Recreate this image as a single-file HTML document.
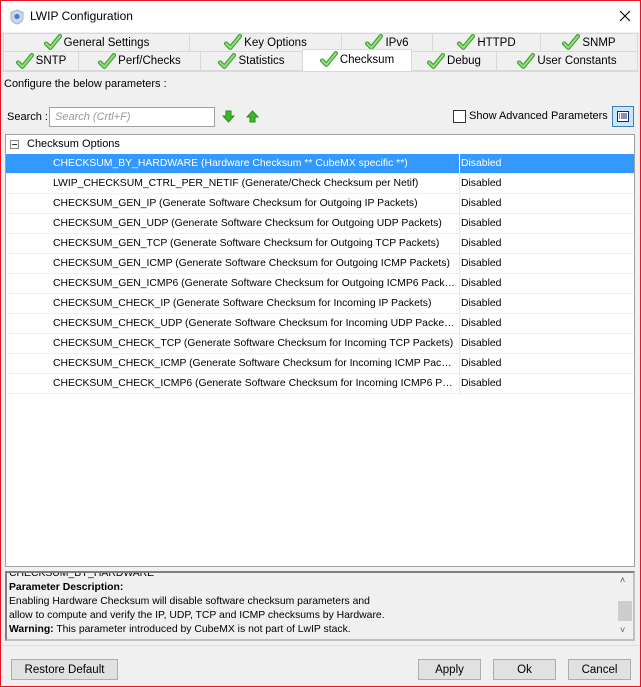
<!DOCTYPE html>
<html><head><style>
*{margin:0;padding:0;box-sizing:border-box}
body{width:641px;height:687px;background:#f0f0f0;font-family:"Liberation Sans",sans-serif;font-size:11px;color:#000;position:relative;overflow:hidden}
.win{position:absolute;left:0;top:0;width:641px;height:687px;border:1px solid #e81123}
.title{position:absolute;left:1px;top:1px;width:639px;height:31px;background:#fff}
.abs{position:absolute}
.tab{position:absolute;height:19px;background:#f0f0f0;border:1px solid #d9d9d9;font-size:11.5px;display:flex;align-items:center;justify-content:center;gap:2px}
.tab svg{width:18px;height:17px}
.sel{background:#fff;border-bottom:none}
.table{position:absolute;left:5px;top:134px;width:630px;height:433px;background:#fff;border:1px solid #a0a0a0;font-size:10.4px}
.row{position:absolute;left:0;width:628px;height:20px;border-bottom:1px solid #f0f0f0;line-height:19px}
.row .n{position:absolute;left:47px;white-space:nowrap;width:402px;overflow:hidden;text-overflow:ellipsis}
.row .v{position:absolute;left:455px;padding-left:0}
.row .d{position:absolute;left:453px;top:0;width:1px;height:20px;background:#e8e8e8}
.hl{background:#3399ff;color:#fff}
.hl .d{background:#fff}
.btn{position:absolute;top:659px;height:21px;background:#e1e1e1;border:1px solid #adadad;font-size:11.5px;display:flex;align-items:center;justify-content:center}
</style></head><body>
<div class="win"></div>
<div class="title">
<svg class="abs" style="left:9px;top:8px" width="14" height="16" viewBox="0 0 14 16"><path d="M7 1 L13 3.5 V9 C13 12 10 14 7 15 C4 14 1 12 1 9 V3.5Z" fill="#cfd8e6" stroke="#9fb1c9"/><path d="M4.5 6 L7 4.8 L9.5 6 V9 L7 10.3 L4.5 9Z" fill="#3b7fd6"/></svg>
<div class="abs" style="left:29px;top:8px;font-size:12px">LWIP Configuration</div>
<svg class="abs" style="left:618px;top:9px" width="12" height="12" viewBox="0 0 12 12"><path d="M1 1L11 11M11 1L1 11" stroke="#000" stroke-width="1.1"/></svg>
</div>
<svg width="0" height="0" style="position:absolute"><defs><symbol id="ck" viewBox="0 0 17 16"><path d="M2 9 L6 13 L15 2" fill="none" stroke="#3a9a2e" stroke-width="4" stroke-linecap="round" stroke-linejoin="round"/><path d="M2 9 L6 13 L15 2" fill="none" stroke="#8fe07a" stroke-width="2" stroke-linecap="round" stroke-linejoin="round"/></symbol></defs></svg>
<div class="tab" style="left:3px;top:33px;width:187px"><svg><use href="#ck"/></svg>General Settings</div>
<div class="tab" style="left:189px;top:33px;width:153px"><svg><use href="#ck"/></svg>Key Options</div>
<div class="tab" style="left:341px;top:33px;width:92px"><svg><use href="#ck"/></svg>IPv6</div>
<div class="tab" style="left:432px;top:33px;width:109px"><svg><use href="#ck"/></svg>HTTPD</div>
<div class="tab" style="left:540px;top:33px;width:98px"><svg><use href="#ck"/></svg>SNMP</div>
<div class="tab" style="left:3px;top:51px;width:76px;height:20px"><svg><use href="#ck"/></svg>SNTP</div>
<div class="tab" style="left:78px;top:51px;width:123px;height:20px"><svg><use href="#ck"/></svg>Perf/Checks</div>
<div class="tab" style="left:200px;top:51px;width:103px;height:20px"><svg><use href="#ck"/></svg>Statistics</div>
<div class="tab sel" style="left:302px;top:49px;width:110px;height:23px;padding-bottom:3px"><svg><use href="#ck"/></svg>Checksum</div>
<div class="tab" style="left:411px;top:51px;width:86px;height:20px"><svg><use href="#ck"/></svg>Debug</div>
<div class="tab" style="left:496px;top:51px;width:142px;height:20px"><svg><use href="#ck"/></svg>User Constants</div>
<div class="abs" style="left:2px;top:71px;width:637px;height:1px;background:#d9d9d9"></div>
<div class="abs" style="left:4px;top:78px">Configure the below parameters :</div>
<div class="abs" style="left:7px;top:111px">Search :</div>
<div class="abs" style="left:49px;top:107px;width:166px;height:20px;background:#fff;border:1px solid #a0a0a0;color:#999;font-style:italic;padding:3px 5px">Search (Crtl+F)</div>
<svg class="abs" style="left:222px;top:110px" width="13" height="13" viewBox="0 0 13 13"><path d="M4 1H9V6H12L6.5 12L1 6H4Z" fill="#3cb82c" stroke="#2a8a1e"/></svg>
<svg class="abs" style="left:246px;top:110px" width="13" height="13" viewBox="0 0 13 13"><path d="M4 12H9V7H12L6.5 1L1 7H4Z" fill="#3cb82c" stroke="#2a8a1e"/></svg>
<div class="abs" style="left:453px;top:110px;width:13px;height:13px;background:#fff;border:1px solid #333"></div>
<div class="abs" style="left:469px;top:110px">Show Advanced Parameters</div>
<div class="abs" style="left:612px;top:106px;width:22px;height:21px;background:#cce4f7;border:1px solid #3c7fb1"></div>
<svg class="abs" style="left:617px;top:111px" width="12" height="11" viewBox="0 0 12 11"><rect x="0.5" y="0.5" width="11" height="10" fill="#fff" stroke="#0a2a6a"/><path d="M2 3H3M4 3H10M2 5H3M4 5H10M2 7H3M4 7H10" stroke="#0a2a6a"/></svg>
<div class="table">
<div class="row" style="top:0;border-bottom:none"><div class="abs" style="left:4px;top:5px;width:9px;height:9px;border:1px solid #888;background:#fff"></div><div class="abs" style="left:6px;top:9px;width:5px;height:1px;background:#333"></div><span class="abs" style="left:21px;font-size:11px">Checksum Options</span></div>
<div class="row hl" style="top:19px"><span class="n">CHECKSUM_BY_HARDWARE (Hardware Checksum ** CubeMX specific **)</span><i class="d"></i><span class="v">Disabled</span></div>
<div class="row" style="top:39px"><span class="n">LWIP_CHECKSUM_CTRL_PER_NETIF (Generate/Check Checksum per Netif)</span><i class="d"></i><span class="v">Disabled</span></div>
<div class="row" style="top:59px"><span class="n">CHECKSUM_GEN_IP (Generate Software Checksum for Outgoing IP Packets)</span><i class="d"></i><span class="v">Disabled</span></div>
<div class="row" style="top:79px"><span class="n">CHECKSUM_GEN_UDP (Generate Software Checksum for Outgoing UDP Packets)</span><i class="d"></i><span class="v">Disabled</span></div>
<div class="row" style="top:99px"><span class="n">CHECKSUM_GEN_TCP (Generate Software Checksum for Outgoing TCP Packets)</span><i class="d"></i><span class="v">Disabled</span></div>
<div class="row" style="top:119px"><span class="n">CHECKSUM_GEN_ICMP (Generate Software Checksum for Outgoing ICMP Packets)</span><i class="d"></i><span class="v">Disabled</span></div>
<div class="row" style="top:139px"><span class="n">CHECKSUM_GEN_ICMP6 (Generate Software Checksum for Outgoing ICMP6 Packets)</span><i class="d"></i><span class="v">Disabled</span></div>
<div class="row" style="top:159px"><span class="n">CHECKSUM_CHECK_IP (Generate Software Checksum for Incoming IP Packets)</span><i class="d"></i><span class="v">Disabled</span></div>
<div class="row" style="top:179px"><span class="n">CHECKSUM_CHECK_UDP (Generate Software Checksum for Incoming UDP Packets)</span><i class="d"></i><span class="v">Disabled</span></div>
<div class="row" style="top:199px"><span class="n">CHECKSUM_CHECK_TCP (Generate Software Checksum for Incoming TCP Packets)</span><i class="d"></i><span class="v">Disabled</span></div>
<div class="row" style="top:219px"><span class="n">CHECKSUM_CHECK_ICMP (Generate Software Checksum for Incoming ICMP Packets)</span><i class="d"></i><span class="v">Disabled</span></div>
<div class="row" style="top:239px"><span class="n">CHECKSUM_CHECK_ICMP6 (Generate Software Checksum for Incoming ICMP6 Packets)</span><i class="d"></i><span class="v">Disabled</span></div>
</div>
<div class="abs" style="left:5px;top:571px;width:630px;height:70px;border:2px solid #808080;border-right-color:#c0c0c0;border-bottom-color:#c0c0c0;overflow:hidden;background:#f0f0f0">
<div class="abs" style="left:2px;top:-6px;line-height:14px;font-size:10.4px">CHECKSUM_BY_HARDWARE<br><b>Parameter Description:</b><br>Enabling Hardware Checksum will disable software checksum parameters and<br>allow to compute and verify the IP, UDP, TCP and ICMP checksums by Hardware.<br><b>Warning:</b> This parameter introduced by CubeMX is not part of LwIP stack.</div>
<div class="abs" style="left:610px;top:0;width:16px;height:66px;background:#f0f0f0"></div>
<div class="abs" style="left:613px;top:2px;font-size:9px;color:#555">&#708;</div>
<div class="abs" style="left:611px;top:28px;width:14px;height:20px;background:#cdcdcd"></div>
<div class="abs" style="left:613px;top:52px;font-size:9px;color:#555">&#709;</div>
</div>
<div class="abs" style="left:2px;top:645px;width:637px;height:1px;background:#dcdcdc"></div>
<div class="btn" style="left:11px;width:107px">Restore Default</div>
<div class="btn" style="left:418px;width:63px">Apply</div>
<div class="btn" style="left:493px;width:63px">Ok</div>
<div class="btn" style="left:568px;width:63px">Cancel</div>
</body></html>
